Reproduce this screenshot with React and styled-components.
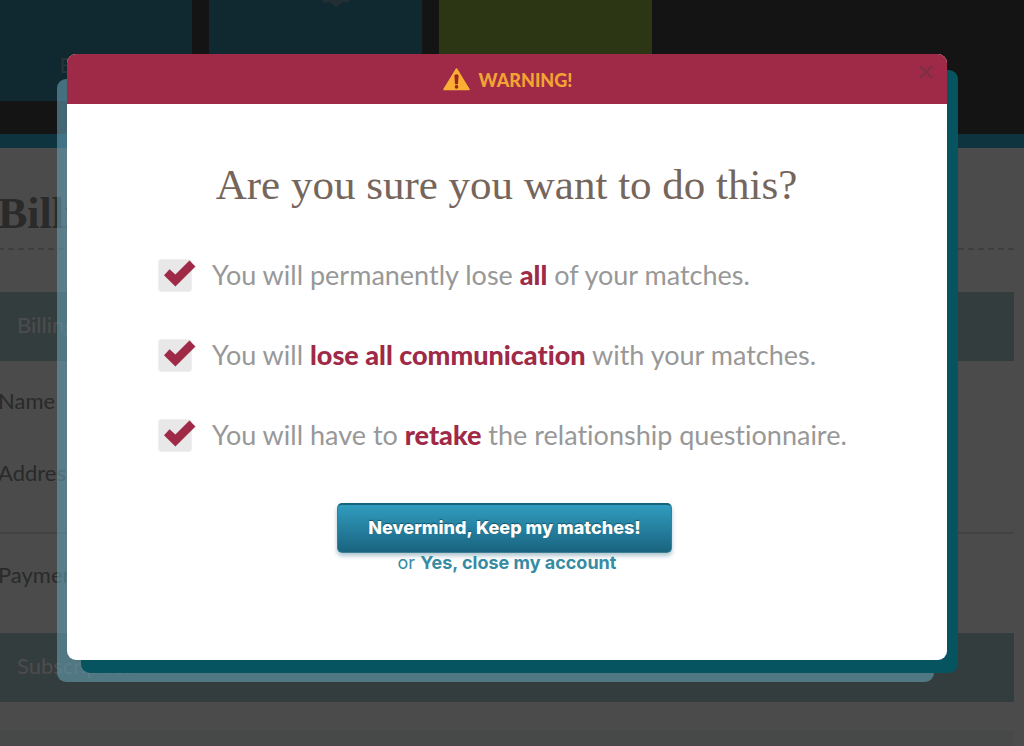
import React from "react";
import styled, { createGlobalStyle, css } from "styled-components";

const sans = `Lato, "Liberation Sans", sans-serif`;
const wide = `Inter, "Liberation Sans", sans-serif`;
const serif = `"Liberation Serif", Georgia, serif`;

const GlobalStyle = createGlobalStyle`
  *, *::before, *::after { box-sizing: border-box; }
  body {
    margin: 0;
    background: #fafafa;
    font-family: ${sans};
  }
  h1, h2, p, ul { margin: 0; padding: 0; }
`;

const Stage = styled.div`
  position: relative;
  height: 100vh;
  overflow: hidden;
`;

const Header = styled.header`
  display: flex;
  gap: 17px;
  height: 148px;
  margin-left: -21px;
  background: #434343;
  border-bottom: 14px solid #2faed2;
`;

const Tile = styled.div`
  display: flex;
  flex-direction: column;
  align-items: center;
  justify-content: ${(p) => (p.$icon ? "flex-start" : "flex-end")};
  width: 213px;
  height: 101px;
  padding: ${(p) => (p.$icon ? "0 0 0 41px" : "0 0 23px")};
  background: ${(p) => (p.$green ? "#93b443" : "#388aa2")};
  color: #8ab0bd;
  font-size: 22px;
`;

const Main = styled.main`
  margin: 0 10px 0 -2px;
  color: #8c8c8c;
  font-size: 22px;
`;

const PageTitle = styled.h1`
  height: 102px;
  padding-top: 40px;
  border-bottom: 2px dashed #cfcfcf;
  font: bold 44px/52px ${serif};
`;

const SectionBar = styled.h2`
  height: 69px;
  padding-left: 19px;
  background: #aacbcb;
  color: #fff;
  font: 400 22px/65px ${sans};
`;

const Billing = styled.section`
  padding-top: 42px;
`;

const Fields = styled.div`
  padding: 4px 0 22px;
`;

const Field = styled.p`
  line-height: 72px;
  ${(p) => p.$ruled && css`
    height: 97px;
    margin-bottom: 5px;
    border-bottom: 2px solid #dcdcdc;
  `}
`;

const Note = styled.div`
  height: 60px;
  margin-top: 29px;
  background: #eef3f2;
`;

const Overlay = styled.div`
  position: absolute;
  inset: 0;
  padding: 54px 77px 0 67px;
  background: rgba(0, 0, 0, 0.7);
`;

const Dialog = styled.section`
  position: relative;
  isolation: isolate;
  max-width: 1100px;
  margin: 0 auto;
`;

const Plate = styled.div`
  position: absolute;
  z-index: -1;
  inset: ${(p) => p.$inset};
  border-radius: 9px;
  background: ${(p) => p.$color};
`;

const Panel = styled.div`
  overflow: hidden;
  border-radius: 9px;
  background: #fff;
`;

const Banner = styled.div`
  position: relative;
  display: flex;
  align-items: center;
  justify-content: center;
  gap: 9px;
  height: 50px;
  padding: 1px 0 0 1px;
  background: #9f2a47;
  color: #f2a433;
  font: 900 18px/24px ${sans};
`;

const Close = styled.button`
  position: absolute;
  top: 9px;
  right: 12px;
  display: flex;
  padding: 0;
  border: 0;
  background: none;
  color: #802e45;
`;

const Body = styled.div`
  padding: 56px 24px 87px 91px;
`;

const Question = styled.h2`
  margin-right: 68px;
  color: #75655b;
  font: 400 43px/50px ${serif};
  text-align: center;
`;

const Losses = styled.ul`
  display: grid;
  gap: 40px;
  margin-top: 45px;
  list-style: none;
`;

const Loss = styled.li`
  display: flex;
  gap: 15px;
  align-items: center;
  height: 40px;
  color: #989898;
  font: 400 27px/40px ${sans};
  font-variant-ligatures: none;
  white-space: nowrap;

  strong { color: #9f2a47; font-weight: 900; }
`;

const Actions = styled.div`
  display: flex;
  flex-direction: column;
  align-items: center;
  margin: 48px 72px 0 0;
`;

const Keep = styled.button`
  width: 335px;
  height: 50px;
  padding: 0 0 2px;
  border: 1px solid #3c7f92;
  border-top: 2px solid #15647b;
  border-radius: 5px;
  background: linear-gradient(#319cbf, #19647f);
  box-shadow: 0 3px 4px rgba(30, 90, 120, 0.35);
  color: #fff;
  font: 800 18px/24px ${wide};
  text-shadow: 0 -1px 1px #15566b;
`;

const Alternative = styled.p`
  padding-left: 5px;
  color: #368ba3;
  font: 400 18px/20px ${wide};

  a { color: inherit; font-weight: 700; text-decoration: none; }
`;

const WarningIcon = () => (
  <svg width="27" height="23" viewBox="0 0 27 23" aria-hidden="true">
    <path d="M13.5 1 26 21.5H1Z" fill="#fbae35" stroke="#fbae35" strokeWidth="1.5" strokeLinejoin="round" />
    <path d="M11.4 7.2q2.1-1.8 4.2 0L15 16.2h-3Z" fill="#9b2323" />
    <circle cx="13.5" cy="18.9" r="1.8" fill="#9b2323" />
  </svg>
);

const Check = () => (
  <svg width="39" height="34" viewBox="0 0 39 34" aria-hidden="true">
    <rect x="0.5" y="1.5" width="33" height="32" rx="3" fill="#e8e8e8" stroke="#eeeeee" />
    <path d="M6 17.2 11.6 11.2 17.4 16.4 31.5 2.5 37.5 8.6 17.4 28.5Z" fill="#9f2a47" />
  </svg>
);

export default function App() {
  return (
    <Stage>
      <GlobalStyle />
      <Header>
        <Tile>Email</Tile>
        <Tile $icon>
          <svg width="28" height="7" viewBox="0 0 28 7" aria-hidden="true">
            <path d="M0 0H28Q26 4 22 2 20 2 18 4.500 14 9 10.500 4.500 8 1 6 2.500 2 4 0 0Z" fill="#729caa" />
          </svg>
        </Tile>
        <Tile $green />
      </Header>
      <Main>
        <PageTitle>Billing</PageTitle>
        <Billing>
          <SectionBar>Billing</SectionBar>
          <Fields>
            <Field>Name</Field>
            <Field $ruled>Address</Field>
            <Field>Payment</Field>
          </Fields>
          <SectionBar>Subscription</SectionBar>
          <Note />
        </Billing>
      </Main>
      <Overlay>
        <Dialog role="dialog" aria-modal="true" aria-labelledby="question">
          <Plate $inset="25px 13px -22px -10px" $color="rgba(102, 158, 178, 0.6)" />
          <Plate $inset="16px -11px -13px 14px" $color="#05545f" />
          <Panel>
            <Banner>
              <WarningIcon />
              WARNING!
              <Close type="button" aria-label="Close">
                <svg width="18" height="18" viewBox="0 0 18 18">
                  <path d="M3 3 15 15M15 3 3 15" stroke="currentColor" strokeWidth="2.6" />
                </svg>
              </Close>
            </Banner>
            <Body>
              <Question id="question">Are you sure you want to do this?</Question>
              <Losses>
                <Loss><Check /><span>You will permanently lose <strong>all</strong> of your matches.</span></Loss>
                <Loss><Check /><span>You will <strong>lose all communication</strong> with your matches.</span></Loss>
                <Loss><Check /><span>You will have to <strong>retake</strong> the relationship questionnaire.</span></Loss>
              </Losses>
              <Actions>
                <Keep type="button">Nevermind, Keep my matches!</Keep>
                <Alternative>or <a href="#close">Yes, close my account</a></Alternative>
              </Actions>
            </Body>
          </Panel>
        </Dialog>
      </Overlay>
    </Stage>
  );
}
